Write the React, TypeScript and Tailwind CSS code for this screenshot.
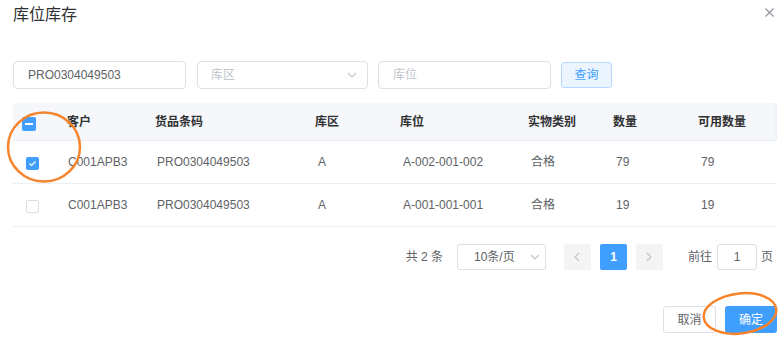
import React from "react";

const rows = [
  { checked: true, cust: "C001APB3", code: "PRO0304049503", zone: "A", loc: "A-002-001-002", kind: "合格", qty: "79", avail: "79" },
  { checked: false, cust: "C001APB3", code: "PRO0304049503", zone: "A", loc: "A-001-001-001", kind: "合格", qty: "19", avail: "19" },
];

const Chevron = ({ className }: { className?: string }) => (
  <svg className={className} width="10" height="6" viewBox="0 0 10 6" fill="none">
    <path d="M1 1L5 5L9 1" stroke="#c0c4cc" strokeWidth="1.1" />
  </svg>
);

const grid = "grid grid-cols-[54px_88px_160px_85px_128px_85px_85px_79px]";

export default function App() {
  return (
    <div className="relative w-[782px] h-[342px] overflow-hidden bg-white font-['Liberation_Sans','Noto_Sans_CJK_SC',sans-serif] text-[12px] text-[#606266]">
      {/* Header */}
      <div className="flex items-start justify-between pt-[3px] pl-[13px] pr-[8px] h-[61px]">
        <div className="text-[16px] leading-[24px] text-[#303133]">库位库存</div>
        <svg className="mt-[5px]" width="9" height="9" viewBox="0 0 9 9" fill="none">
          <path d="M0.5 0.5L8.5 8.5M8.5 0.5L0.5 8.5" stroke="#909399" strokeWidth="1.1" />
        </svg>
      </div>

      {/* Search bar */}
      <div className="flex items-center pl-[13px] h-[28px]">
        <div className="w-[173px] h-[28px] border border-[#dcdfe6] rounded-[4px] flex items-center pl-[14px] text-[#606266]">
          PRO0304049503
        </div>
        <div className="ml-[11px] w-[171px] h-[28px] border border-[#dcdfe6] rounded-[4px] flex items-center justify-between pl-[13px] pr-[10px] text-[#c0c4cc]">
          <span>库区</span>
          <Chevron />
        </div>
        <div className="ml-[10px] w-[173px] h-[28px] border border-[#dcdfe6] rounded-[4px] flex items-center pl-[14px] text-[#c0c4cc]">
          库位
        </div>
        <div className="ml-[10px] w-[51px] h-[26px] border border-[#b3d8ff] bg-[#ecf5ff] rounded-[3px] flex items-center justify-center text-[#409eff]">
          查询
        </div>
      </div>

      {/* Table */}
      <div className="mt-[14px] ml-[13px] w-[764px]">
        <div className={`${grid} h-[38px] bg-[#f5f7fa] border-b border-[#ebeef5] text-[#303133] font-bold`}>
          <div className="pl-[9px] pt-[14px]">
            <div className="w-[14px] h-[14px] rounded-[2px] bg-[#409eff] flex items-center justify-center">
              <div className="w-[8px] h-[2px] bg-white" />
            </div>
          </div>
          {["客户", "货品条码", "库区", "库位", "实物类别", "数量", "可用数量"].map((h, i) => (
            <div key={i} className={`flex items-center ${i === 6 ? "border-r-2 border-[#eaf2fd]" : ""}`}>
              {h}
            </div>
          ))}
        </div>
        {rows.map((r, idx) => (
          <div key={idx} className={`${grid} h-[43px] border-b border-[#ebeef5]`}>
            <div className="pl-[13px] flex items-center pt-[3px]">
              {r.checked ? (
                <div className="w-[13px] h-[13px] rounded-[2px] bg-[#409eff] flex items-center justify-center">
                  <svg width="9" height="7" viewBox="0 0 9 7" fill="none">
                    <path d="M1.5 3.5L3.6 5.5L7.5 1.5" stroke="white" strokeWidth="1.2" />
                  </svg>
                </div>
              ) : (
                <div className="w-[13px] h-[13px] rounded-[2px] border border-[#dcdfe6] bg-white" />
              )}
            </div>
            <div className="flex items-center pl-[1px]">{r.cust}</div>
            <div className="flex items-center pl-[2px]">{r.code}</div>
            <div className="flex items-center pl-[3px]">{r.zone}</div>
            <div className="flex items-center pl-[3px]">{r.loc}</div>
            <div className="flex items-center pl-[3px]">{r.kind}</div>
            <div className="flex items-center pl-[3px]">{r.qty}</div>
            <div className="flex items-center pl-[3px]">{r.avail}</div>
          </div>
        ))}
      </div>

      {/* Pagination */}
      <div className="mt-[17px] flex items-center justify-end pr-[9px] h-[26px] text-[#606266]">
        <span>共 2 条</span>
        <div className="ml-[14px] w-[89px] h-[26px] border border-[#dcdfe6] rounded-[3px] flex items-center justify-between pl-[16px] pr-[5px]">
          <span>10条/页</span>
          <Chevron />
        </div>
        <div className="ml-[18px] w-[27px] h-[26px] rounded-[2px] bg-[#f4f4f5] flex items-center justify-center">
          <svg width="6" height="10" viewBox="0 0 6 10" fill="none">
            <path d="M5 1L1 5L5 9" stroke="#c0c4cc" strokeWidth="1.2" />
          </svg>
        </div>
        <div className="ml-[9px] w-[27px] h-[26px] rounded-[2px] bg-[#409eff] flex items-center justify-center text-white font-bold">
          1
        </div>
        <div className="ml-[9px] w-[27px] h-[26px] rounded-[2px] bg-[#f4f4f5] flex items-center justify-center">
          <svg width="6" height="10" viewBox="0 0 6 10" fill="none">
            <path d="M1 1L5 5L1 9" stroke="#c0c4cc" strokeWidth="1.2" />
          </svg>
        </div>
        <span className="ml-[25px]">前往</span>
        <div className="ml-[5px] w-[40px] h-[26px] border border-[#dcdfe6] rounded-[3px] flex items-center justify-center">
          1
        </div>
        <span className="ml-[4px]">页</span>
      </div>

      {/* Footer */}
      <div className="mt-[36px] flex items-center justify-end pr-[5px]">
        <div className="w-[53px] h-[27px] border border-[#dcdfe6] rounded-[3px] flex items-center justify-center text-[#606266]">
          取消
        </div>
        <div className="ml-[9px] w-[52px] h-[27px] bg-[#409eff] rounded-[3px] flex items-center justify-center text-white">
          确定
        </div>
      </div>

      {/* Annotation circles */}
      <svg className="absolute inset-0 pointer-events-none" width="782" height="342" viewBox="0 0 782 342">
        <ellipse cx="44" cy="147" rx="36" ry="34.5" fill="none" stroke="#f7842b" strokeWidth="2.5" />
        <ellipse cx="740" cy="313.5" rx="36.5" ry="20" fill="none" stroke="#f7842b" strokeWidth="2.5" transform="rotate(-7 740 313.5)" />
      </svg>
    </div>
  );
}
